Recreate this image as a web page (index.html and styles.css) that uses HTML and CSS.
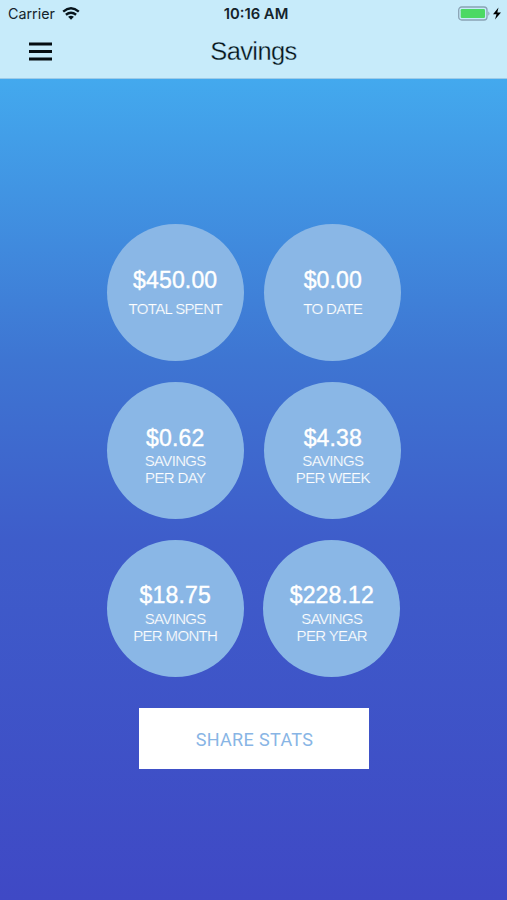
FILE: index.html
```
<!DOCTYPE html>
<html lang="en">
<head>
<meta charset="utf-8">
<title>Savings</title>
<link rel="stylesheet" href="styles.css">
</head>
<body>
<header class="top">
  <div class="status">
    <div class="carrier"><span>Carrier</span>
      <svg width="18" height="13" viewBox="0 0 18 13"><g fill="none" stroke="#07141b" stroke-width="2.400"><path d="M1.200 4.600Q9 -2 16.800 4.600"/><path d="M3.900 7.700Q9 3.600 14.100 7.700"/></g><path fill="#07141b" d="M6.100 9.800Q9 7.700 11.900 9.800L9 12.700Z"/></svg>
    </div>
    <div class="time">10:16 AM</div>
    <svg class="battery" width="45" height="15" viewBox="0 0 45 15"><rect x=".7" y="1" width="28.300" height="13" rx="3" fill="none" stroke="#8aa3b4" stroke-width="1.300"/><rect x="2.700" y="3" width="24.300" height="9" rx="1.200" fill="#4cd964"/><path d="M30.300 5.200Q32.700 7.500 30.300 9.800Z" fill="#8aa3b4"/><path d="M40.500 1.500L35 8.300H38.500L37 13.500L43 6.500H39.300Z"/></svg>
  </div>
  <div class="nav">
    <svg class="menu" width="24" height="19" viewBox="0 0 24 19"><path fill="#050d11" d="M1 .5H24V3.500H1ZM1 8H24V11H1ZM1 15.500H24V18.500H1Z"/></svg>
    <h1>Savings</h1>
  </div>
</header>
<main>
  <section class="stats">
    <div class="stat single"><strong>$450.00</strong><span>TOTAL SPENT</span></div>
    <div class="stat single"><strong>$0.00</strong><span>TO DATE</span></div>
    <div class="stat"><strong>$0.62</strong><span>SAVINGS<br>PER DAY</span></div>
    <div class="stat"><strong>$4.38</strong><span>SAVINGS<br>PER WEEK</span></div>
    <div class="stat low"><strong>$18.75</strong><span>SAVINGS<br>PER MONTH</span></div>
    <div class="stat low last"><strong>$228.12</strong><span>SAVINGS<br>PER YEAR</span></div>
  </section>
  <button class="share">SHARE STATS</button>
</main>
</body>
</html>
```
FILE: styles.css
```
* { box-sizing: border-box; }
body { margin: 0; height: 900px; display: flex; flex-direction: column; font-family: "Liberation Sans", Arial, sans-serif; background: linear-gradient(#43a9ee 79px, #3e75d2 360px, #3e5dca 540px, #3f49c5 900px); overflow: hidden; }
.top { height: 79px; background: #c7ebfa; border-bottom: 1px solid #9ccbe8; }
.status { height: 27px; display: grid; grid-template-columns: 1fr auto 1fr; align-items: center; padding: 0 4px 0 8px; font: 14.3px Inter, sans-serif; color: #14232b; }
.carrier { display: flex; align-items: center; gap: 7px; }
.time { font-weight: 600; font-size: 14.8px; margin-left: 1px; }
.battery { justify-self: end; }
.nav { display: grid; grid-template-columns: 1fr auto 1fr; align-items: center; height: 49px; }
.menu { margin-left: 28px; }
h1 { margin: 0; font-size: 25.5px; font-weight: 400; letter-spacing: -.6px; color: #07141b; -webkit-text-stroke: .3px #c7ebfa; }
main { display: flex; flex-direction: column; align-items: center; padding-top: 145.4px; }
.stats { display: grid; grid-template-columns: 137px 137px; gap: 20.6px; margin-left: 1px; }
.stat { width: 137px; height: 137px; border-radius: 50%; background: #8ab7e6; color: #fff; text-align: center; padding-top: 42.6px; }
.stat strong { display: block; font-size: 23px; line-height: 27px; font-weight: 400; letter-spacing: .15px; -webkit-text-stroke: .4px #fff; }
.stat span { display: block; font-size: 15px; line-height: 17px; letter-spacing: -.65px; -webkit-text-stroke: .2px #8ab7e6; }
.single span { margin-top: 6px; }
.low span { margin-top: 1px; }
.last { margin-left: -1px; }
.share { width: 230px; height: 61px; margin-top: 31.3px; border: 0; background: #fff; color: #88b5e5; font: 18px Roboto, sans-serif; letter-spacing: .35px; padding: 2px 0 0 2px; }
```
